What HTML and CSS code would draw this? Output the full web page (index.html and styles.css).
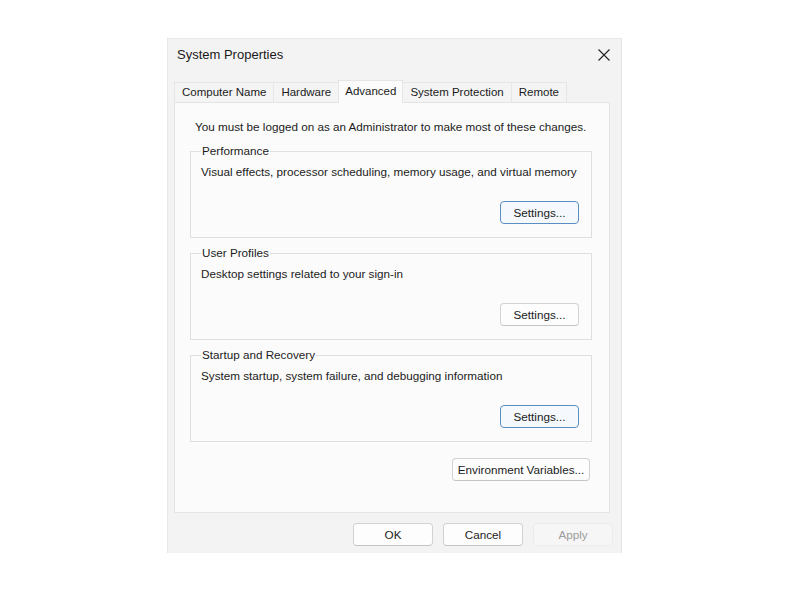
FILE: index.html
```html
<!DOCTYPE html>
<html>
<head>
<meta charset="utf-8">
<link rel="stylesheet" href="styles.css">
</head>
<body>
<div class="window">
  <div class="titlebar">
    <span class="title">System Properties</span>
    <span class="close">
      <svg width="12" height="12" viewBox="0 0 12 12"><path d="M0.5 0.5 L11.5 11.5 M11.5 0.5 L0.5 11.5" stroke="#222" stroke-width="1.1" fill="none"/></svg>
    </span>
  </div>
  <div class="tabs">
    <div class="tab">Computer Name</div>
    <div class="tab">Hardware</div>
    <div class="tab active">Advanced</div>
    <div class="tab">System Protection</div>
    <div class="tab">Remote</div>
  </div>
  <div class="panel">
    <p class="note">You must be logged on as an Administrator to make most of these changes.</p>
    <fieldset class="group">
      <legend>Performance</legend>
      <p class="desc">Visual effects, processor scheduling, memory usage, and virtual memory</p>
      <div class="row"><button class="btn focus">Settings...</button></div>
    </fieldset>
    <fieldset class="group g2">
      <legend>User Profiles</legend>
      <p class="desc">Desktop settings related to your sign-in</p>
      <div class="row"><button class="btn">Settings...</button></div>
    </fieldset>
    <fieldset class="group g3">
      <legend>Startup and Recovery</legend>
      <p class="desc">System startup, system failure, and debugging information</p>
      <div class="row"><button class="btn focus">Settings...</button></div>
    </fieldset>
    <div class="envrow"><button class="btn env">Environment Variables...</button></div>
  </div>
  <div class="footer">
    <button class="btn wide">OK</button>
    <button class="btn wide">Cancel</button>
    <button class="btn wide disabled">Apply</button>
  </div>
</div>
</body>
</html>
```

FILE: styles.css
```css
html, body {
  margin: 0;
  padding: 0;
  background: #ffffff;
}
body {
  font-family: "Liberation Sans", Arial, sans-serif;
  font-size: 11.7px;
  color: #1b1b1b;
}
.window {
  margin: 38px 0 0 167px;
  width: 455px;
  height: 515px;
  box-sizing: border-box;
  background: #f3f3f3;
  border-top: 1px solid #e8e8e8;
  border-left: 1px solid #e8e8e8;
  border-right: 1px solid #e4e4e4;
  display: flex;
  flex-direction: column;
  white-space: nowrap;
}
.titlebar {
  height: 31px;
  display: flex;
  align-items: center;
  justify-content: space-between;
  padding: 0 11px 0 9px;
}
.title {
  font-size: 13px;
  color: #1a1a1a;
}
.close {
  display: flex;
  width: 12px;
  height: 12px;
}
.tabs {
  margin-top: 10px;
  margin-left: 6px;
  display: flex;
  align-items: flex-end;
  height: 22px;
  font-size: 11.5px;
}
.tab {
  height: 19px;
  line-height: 19px;
  padding: 0 7px;
  border: 1px solid #e6e6e6;
  border-bottom: none;
  margin-right: -1px;
  background: #f4f4f4;
  color: #1b1b1b;
}
.tab.active {
  height: 22px;
  line-height: 20px;
  background: #fbfbfb;
  position: relative;
  z-index: 1;
  margin-bottom: -1px;
  padding: 0 6px;
}
.panel {
  margin: 0 11px 0 6px;
  height: 411px;
  box-sizing: border-box;
  background: #fbfbfb;
  border: 1px solid #e4e4e4;
  padding: 16px 17px 0 15px;
}
.note {
  margin: 0 0 0 5px;
  line-height: 16px;
}
.group {
  margin: 8px 0 0 0;
  border: 1px solid #dfdfdf;
  padding: 0 12px 13px 10px;
}
.g2 { margin-top: 7px; }
.g3 { margin-top: 7px; }
.group legend {
  padding: 0 1px;
  line-height: 16px;
  color: #1b1b1b;
}
.desc {
  margin: 5px 0 0 0;
  line-height: 16px;
}
.row {
  display: flex;
  justify-content: flex-end;
  margin-top: 21px;
}
.btn {
  font-family: "Liberation Sans", Arial, sans-serif;
  font-size: 11.7px;
  color: #1b1b1b;
  height: 23px;
  width: 79px;
  box-sizing: border-box;
  background: #fdfdfd;
  border: 1px solid #d2d2d2;
  border-bottom-color: #c4c4c4;
  border-radius: 4px;
  padding: 0;
}
.btn.focus {
  border: 1px solid #5b8fc2;
  background: #f5f9fd;
}
.envrow {
  display: flex;
  justify-content: flex-end;
  margin-top: 16px;
  margin-right: 2px;
}
.btn.env {
  width: 138px;
}
.footer {
  display: flex;
  justify-content: flex-end;
  gap: 10px;
  padding: 10px 8px 0 0;
}
.btn.wide {
  width: 80px;
  height: 23px;
}
.btn.disabled {
  background: #f6f6f6;
  border-color: #ececec;
  color: #9c9c9c;
}
```
